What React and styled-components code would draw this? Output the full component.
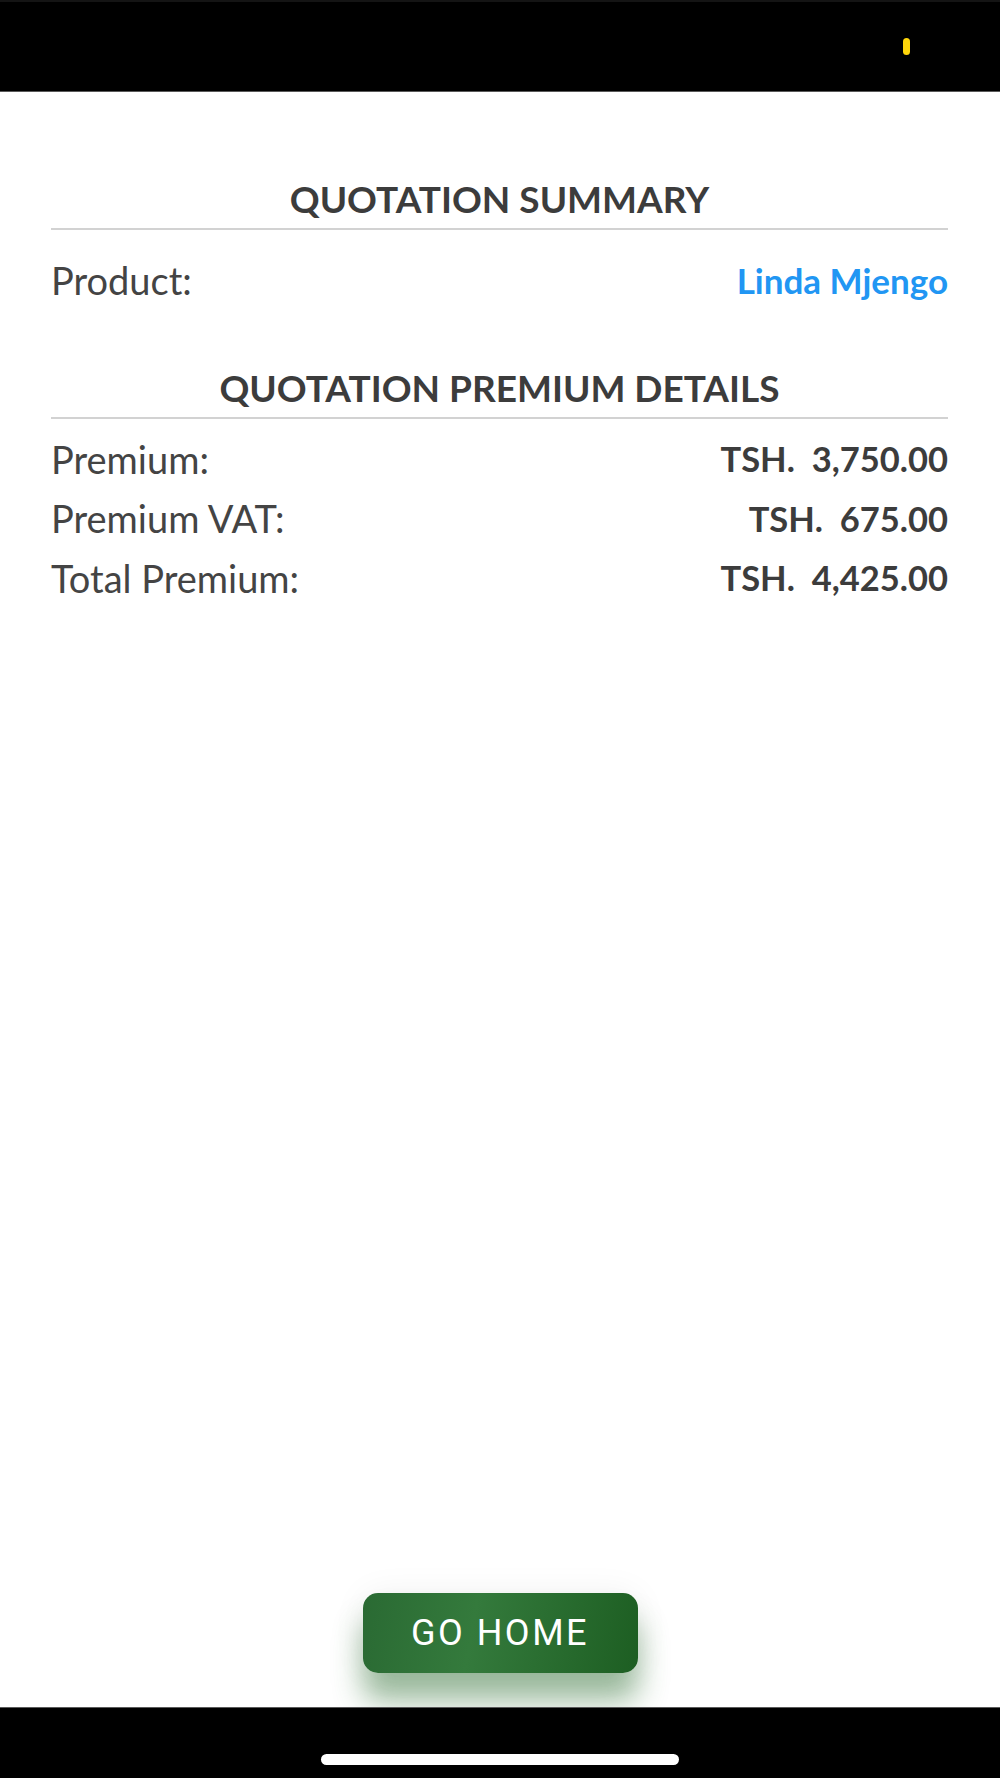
import React from "react";
import styled, { createGlobalStyle } from "styled-components";

const GlobalStyle = createGlobalStyle`
  html, body {
    margin: 0;
    padding: 0;
    background: #ffffff;
  }
  body {
    font-family: Lato, "Noto Sans", sans-serif;
    color: #3e3e3e;
  }
`;

const premiumRows = [
    { label: "Premium:", value: "TSH.  3,750.00" },
    { label: "Premium VAT:", value: "TSH.  675.00" },
    { label: "Total Premium:", value: "TSH.  4,425.00" },
];

function App () {
    return (
        <>
            <GlobalStyle />
            <Screen>
                <StatusBar>
                    <Indicator />
                </StatusBar>

                <Content>
                    <SectionTitle>QUOTATION SUMMARY</SectionTitle>
                    <Divider />
                    <Row $height={100}>
                        <Label>Product:</Label>
                        <Value $accent>Linda Mjengo</Value>
                    </Row>

                    <SectionTitle $top={35}>QUOTATION PREMIUM DETAILS</SectionTitle>
                    <Divider />
                    <RowList>
                        {premiumRows.map(row =>
                            <Row key={row.label} $height={59.5}>
                                <Label>{row.label}</Label>
                                <Value>{row.value}</Value>
                            </Row>
                        )}
                    </RowList>
                </Content>

                <Footer>
                    <HomeButton>GO HOME</HomeButton>
                </Footer>

                <HomeBar>
                    <HomeIndicator />
                </HomeBar>
            </Screen>
        </>
    );
}

export default App;

const Screen = styled.div`
    width: 1000px;
    height: 1778px;
    display: flex;
    flex-direction: column;
    overflow: hidden;
    background: #ffffff;
`;

const StatusBar = styled.div`
    height: 92px;
    box-sizing: border-box;
    background: #000000;
    border-top: 2px solid #141414;
    border-bottom: 1px solid #5a5a5a;
    display: flex;
    align-items: center;
    justify-content: flex-end;
    padding-right: 90px;
`;

const Indicator = styled.div`
    width: 7px;
    height: 17px;
    border-radius: 4px;
    background: #ffd60a;
`;

const Content = styled.div`
    flex: 1;
    display: flex;
    flex-direction: column;
    padding: 84px 52px 0 51px;
`;

const SectionTitle = styled.div`
    margin-top: ${props => props.$top || 0}px;
    font-family: Lato, sans-serif;
    font-weight: 700;
    font-size: 37px;
    line-height: 46px;
    text-align: center;
    color: #3c3c3c;
`;

const Divider = styled.div`
    margin-top: 6px;
    height: 2px;
    background: #d2d2d2;
`;

const RowList = styled.div`
    display: flex;
    flex-direction: column;
    padding-top: 10px;
`;

const Row = styled.div`
    height: ${props => props.$height}px;
    display: flex;
    align-items: center;
    justify-content: space-between;
`;

const Label = styled.span`
    font-family: Lato, sans-serif;
    font-size: 38px;
    font-weight: 400;
    color: #444444;
`;

const Value = styled.span`
    font-family: Lato, sans-serif;
    font-size: ${props => props.$accent ? 35 : 34.5}px;
    font-weight: 700;
    white-space: pre;
    color: ${props => props.$accent ? "#2196f3" : "#3c3c3c"};
`;

const Footer = styled.div`
    display: flex;
    justify-content: center;
    padding-bottom: 34px;
`;

const HomeButton = styled.button`
    width: 275px;
    height: 80px;
    border: none;
    border-radius: 15px;
    background: linear-gradient(100deg, #2a6a33 0%, #347a3c 40%, #1d5e22 100%);
    box-shadow: 0 28px 30px rgba(35, 105, 40, 0.45), 0 0 34px rgba(0, 0, 0, 0.06);
    color: #ffffff;
    font-family: Roboto, "Liberation Sans", sans-serif;
    font-size: 36px;
    font-weight: 400;
    letter-spacing: 2.5px;
    padding: 0;
`;

const HomeBar = styled.div`
    height: 71px;
    box-sizing: border-box;
    background: #000000;
    border-top: 1px solid #5a5a5a;
    display: flex;
    justify-content: center;
    padding-top: 46px;
`;

const HomeIndicator = styled.div`
    width: 358px;
    height: 11px;
    border-radius: 6px;
    background: #ffffff;
`;
